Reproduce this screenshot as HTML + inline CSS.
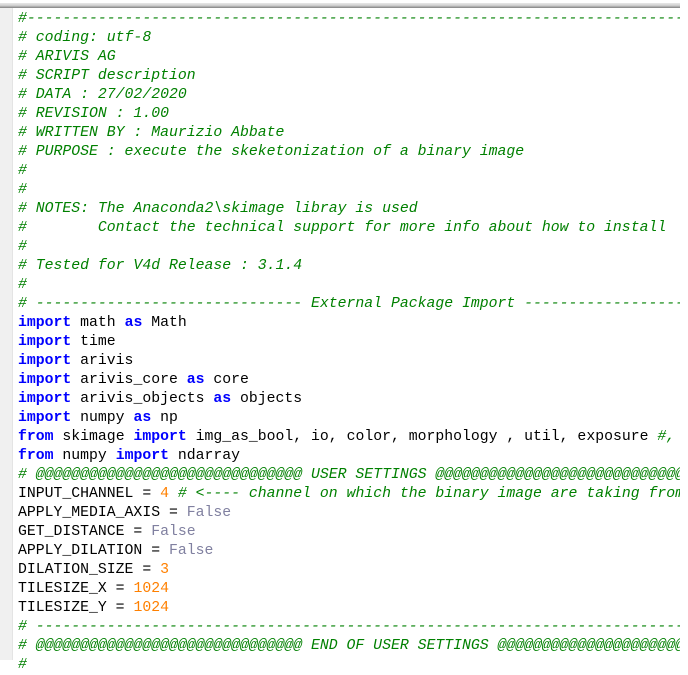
<!DOCTYPE html>
<html><head><meta charset="utf-8"><style>
html,body{margin:0;padding:0;background:#fff;width:688px;height:660px;overflow:hidden}
.top{position:absolute;left:0;top:3px;width:680px;height:5px;background:linear-gradient(#e8e8e8,#d0d0d0 50%,#808080)}
.gut{position:absolute;left:0;top:8px;width:12px;height:652px;background:#f0f0f0;border-right:1px solid #e4e4e4}
.code{position:absolute;left:18px;top:10px;width:662px;overflow:hidden;font-family:"Liberation Mono","Courier New",monospace;font-size:14.8px;line-height:19px;white-space:pre;color:#000}
.c{color:#008000;font-style:italic}
.k{color:#0000ff;font-weight:bold}
.n{color:#ff8000}
.f{color:#8080a0}
</style></head><body>
<div class="top"></div><div class="gut"></div>
<div class="code"><span class="c">#-----------------------------------------------------------------------------</span>
<span class="c"># coding: utf-8</span>
<span class="c"># ARIVIS AG</span>
<span class="c"># SCRIPT description</span>
<span class="c"># DATA : 27/02/2020</span>
<span class="c"># REVISION : 1.00</span>
<span class="c"># WRITTEN BY : Maurizio Abbate</span>
<span class="c"># PURPOSE : execute the skeketonization of a binary image</span>
<span class="c">#</span>
<span class="c">#</span>
<span class="c"># NOTES: The Anaconda2\skimage libray is used</span>
<span class="c">#        Contact the technical support for more info about how to install</span>
<span class="c">#</span>
<span class="c"># Tested for V4d Release : 3.1.4</span>
<span class="c">#</span>
<span class="c"># ------------------------------ External Package Import ----------------------</span>
<span class="k">import</span> math <span class="k">as</span> Math
<span class="k">import</span> time
<span class="k">import</span> arivis
<span class="k">import</span> arivis_core <span class="k">as</span> core
<span class="k">import</span> arivis_objects <span class="k">as</span> objects
<span class="k">import</span> numpy <span class="k">as</span> np
<span class="k">from</span> skimage <span class="k">import</span> img_as_bool, io, color, morphology , util, exposure <span class="c">#,</span>
<span class="k">from</span> numpy <span class="k">import</span> ndarray
<span class="c"># @@@@@@@@@@@@@@@@@@@@@@@@@@@@@@ USER SETTINGS @@@@@@@@@@@@@@@@@@@@@@@@@@@@@@@@@</span>
INPUT_CHANNEL = <span class="n">4</span> <span class="c"># &lt;---- channel on which the binary image are taking from</span>
APPLY_MEDIA_AXIS = <span class="f">False</span>
GET_DISTANCE = <span class="f">False</span>
APPLY_DILATION = <span class="f">False</span>
DILATION_SIZE = <span class="n">3</span>
TILESIZE_X = <span class="n">1024</span>
TILESIZE_Y = <span class="n">1024</span>
<span class="c"># -----------------------------------------------------------------------------</span>
<span class="c"># @@@@@@@@@@@@@@@@@@@@@@@@@@@@@@ END OF USER SETTINGS @@@@@@@@@@@@@@@@@@@@@@@@@@</span>
<span class="c">#</span></div>
</body></html>
